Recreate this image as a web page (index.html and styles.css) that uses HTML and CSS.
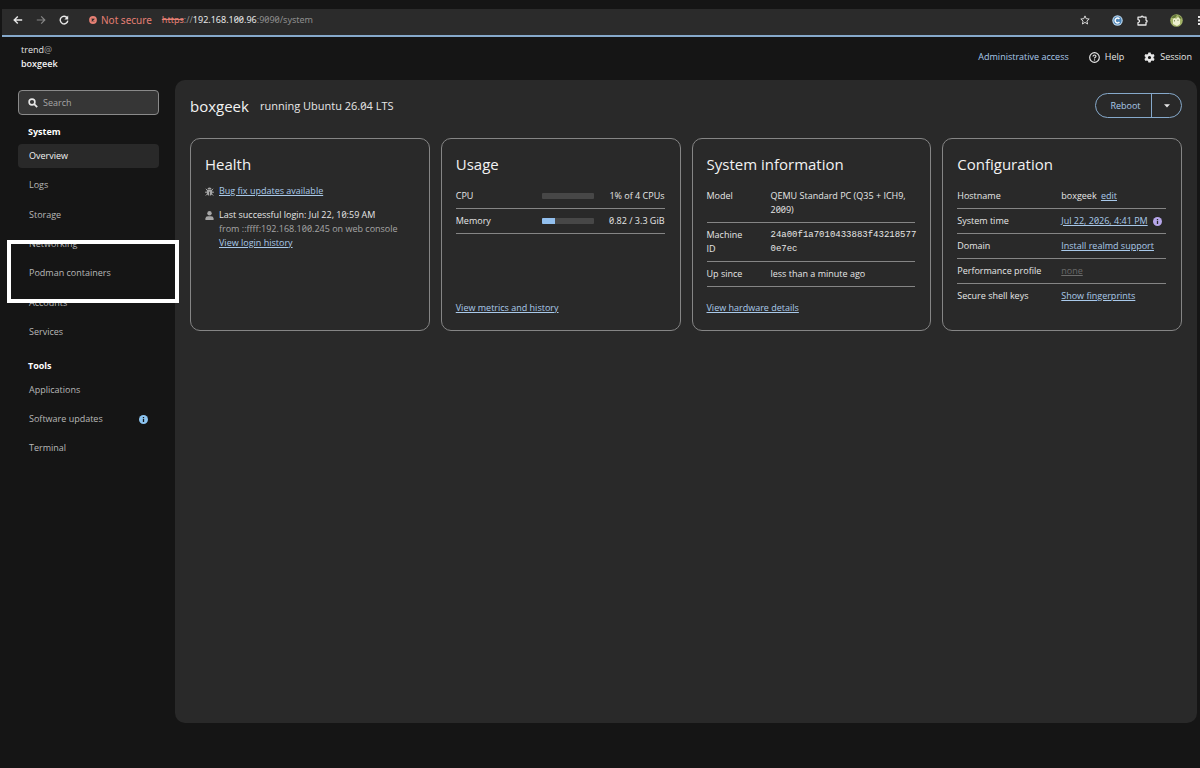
FILE: index.html
```html
<!DOCTYPE html>
<html lang="en">
<head>
<meta charset="utf-8">
<meta name="viewport" content="width=device-width, initial-scale=1">
<title>Overview - trend@boxgeek</title>
<link rel="stylesheet" href="styles.css">
</head>
<body>
<div class="toolbar">
  <button class="tool" aria-label="Back"><svg width="10" height="10" viewBox="0 0 10 10"><path d="M9.2 5H1.4M4.8 1.4L1.2 5l3.6 3.6" fill="none" stroke="currentColor" stroke-width="1.4"/></svg></button>
  <button class="tool tool-off" aria-label="Forward"><svg width="10" height="10" viewBox="0 0 10 10"><path d="M.8 5h7.8M5.2 1.4L8.8 5 5.2 8.6" fill="none" stroke="currentColor" stroke-width="1.2"/></svg></button>
  <button class="tool" aria-label="Reload"><svg width="10" height="10" viewBox="0 0 10 10"><path d="M8.2 3A3.8 3.8 0 1 0 8.8 5.6" fill="none" stroke="currentColor" stroke-width="1.4"/><path d="M9.2.6v3.8H5.4z" fill="currentColor"/></svg></button>
  <div class="address">
    <span class="insecure"><svg width="8" height="8" viewBox="0 0 8 8"><circle cx="4" cy="4" r="3.9" fill="#e57f73"/><path d="M2.7 2.7l2.6 2.6M5.3 2.7L2.7 5.3" stroke="#2b2b2b" stroke-width="1.1"/></svg>Not secure</span>
    <span class="url"><s>https</s>://<b>192.168.100.96</b>:9090/system</span>
  </div>
  <div class="toolbar-right">
    <button class="tool" aria-label="Bookmark"><svg width="10" height="10" viewBox="0 0 10 10"><path d="M5 .9l1.2 2.8 3 .3-2.3 2 .7 3L5 7.4 2.400 9l.7-3L.8 4l3-.3z" fill="none" stroke="currentColor" stroke-width=".9"/></svg></button>
    <button class="tool tool-extension" aria-label="Extension"><svg width="11" height="11" viewBox="0 0 11 11"><circle cx="5.500" cy="5.500" r="5.200" fill="#b7d4ec"/><circle cx="5.500" cy="5.500" r="4" fill="#4c84b6"/><path d="M7.400 4A2.400 2.400 0 1 0 7.400 7" fill="none" stroke="#fff" stroke-width="1.500"/></svg></button>
    <button class="tool" aria-label="Extensions"><svg width="11" height="11" viewBox="0 0 11 11"><path d="M1 2.200h3a1.100 1.100 0 0 1 2.200 0H9v3a1.100 1.100 0 0 1 0 2.200V10H1V7.600a1.500 1.500 0 0 0 0-3z" fill="none" stroke="currentColor" stroke-width="1.300" stroke-linejoin="round"/></svg></button>
    <button class="tool tool-profile" aria-label="Profile"><svg width="13" height="13" viewBox="0 0 13 13"><circle cx="6.500" cy="6.500" r="6.300" fill="#a3b368"/><path d="M1 4Q4 0 7 1L5 4zM8 1l4 3-2 1z" fill="#66793b"/><path d="M3 5l2-1 1 1 2-2 2 2v5l-3 2-4-2z" fill="#edf0cf"/><path d="M4.500 6v1.500M8 5.500V7" stroke="#6f7d4c" stroke-width=".8"/></svg></button>
    <button class="tool" aria-label="Menu"><svg width="3" height="10" viewBox="0 0 3 10"><path d="M1 1h2v2H1zM1 4.500h2v2H1zM1 8h2v2H1z" fill="currentColor"/></svg></button>
  </div>
</div>

<div class="shell">
  <header class="masthead">
    <div class="host"><span>trend<i>@</i></span><strong>boxgeek</strong></div>
    <div class="masthead-actions">
      <button class="plain access">Administrative access</button>
      <button class="plain"><svg width="11" height="11" viewBox="0 0 11 11"><circle cx="5.500" cy="5.500" r="4.800" fill="none" stroke="currentColor" stroke-width="1.200"/><path d="M4 4.400Q4 3 5.500 3T7 4.300C7 5.300 5.500 5.200 5.500 6.400" fill="none" stroke="currentColor" stroke-width="1.100"/><circle cx="5.500" cy="7.900" r=".7" fill="currentColor"/></svg>Help</button>
      <button class="plain"><svg width="11" height="11" viewBox="0 0 11 11"><path fill="currentColor" fill-rule="evenodd" d="M4.400.4h2.200l.4 1.500 1 .6 1.500-.5 1.100 1.900-1.100 1.100v1l1.100 1.100L9.500 9 8 8.500l-1 .6-.4 1.500H4.400L4 9.100l-1-.6L1.500 9 .4 7.100 1.500 6V5L.4 3.900 1.500 2l1.500.5 1-.6zM5.500 3.900a1.600 1.600 0 1 0 0 3.200 1.600 1.600 0 0 0 0-3.200z"/></svg>Session</button>
    </div>
  </header>

  <nav class="sidebar" aria-label="System navigation">
    <label class="search"><svg width="10" height="10" viewBox="0 0 10 10"><circle cx="4" cy="4" r="2.900" fill="none" stroke="currentColor" stroke-width="1.600"/><path d="M6.200 6.200L9.200 9.200" stroke="currentColor" stroke-width="1.800"/></svg><input type="search" placeholder="Search" aria-label="Search"></label>
    <h2 class="nav-title">System</h2>
    <ul class="nav-list nav-list-system">
      <li><a class="nav-link current" href="#overview" aria-current="page">Overview</a></li>
      <li><a class="nav-link" href="#logs">Logs</a></li>
      <li><a class="nav-link" href="#storage">Storage</a></li>
      <li><a class="nav-link" href="#networking">Networking</a></li>
      <li class="marked"><a class="nav-link" href="#podman">Podman containers</a></li>
      <li><a class="nav-link" href="#accounts">Accounts</a></li>
      <li><a class="nav-link" href="#services">Services</a></li>
    </ul>
    <h2 class="nav-title nav-title-tools">Tools</h2>
    <ul class="nav-list">
      <li><a class="nav-link" href="#applications">Applications</a></li>
      <li><a class="nav-link" href="#updates">Software updates<svg width="9" height="9" viewBox="0 0 9 9"><circle cx="4.500" cy="4.500" r="4.500" fill="#8cc4f0"/><path d="M4.500 2v1.200M4.500 4v3" stroke="#151515" stroke-width="1.300"/></svg></a></li>
      <li><a class="nav-link" href="#terminal">Terminal</a></li>
    </ul>
  </nav>

  <main class="page">
    <div class="page-head">
      <h1 class="page-title">boxgeek</h1>
      <span class="running">running Ubuntu 26.04 LTS</span>
      <div class="split">
        <button class="split-main">Reboot</button>
        <button class="split-toggle" aria-label="More power options"><svg width="6" height="4" viewBox="0 0 6 4"><path d="M0 .2h6L3 3.600z" fill="currentColor"/></svg></button>
      </div>
    </div>

    <div class="cards">
      <section class="card">
        <h2 class="card-title">Health</h2>
        <ul class="health">
          <li><svg width="9" height="9" viewBox="0 0 9 9"><path d="M2.400 2.600a2.100 2.100 0 0 1 4.200 0zM1.800 3h5.400v3.500Q6.800 8.500 4.900 8.800V4.800h-.8v4Q2.200 8.500 1.800 6.500z" fill="currentColor"/><path d="M.8 1.800L2.300 3.300M8.200 1.800L6.700 3.300M0 5.200h2M7 5.200h2M.8 8.500L2.500 6.800M8.200 8.500L6.500 6.800" stroke="currentColor" stroke-width="1"/></svg>
            <div><a href="#fixes">Bug fix updates available</a></div></li>
          <li><svg width="9" height="9" viewBox="0 0 9 9"><circle cx="4.500" cy="2.300" r="2.200" fill="currentColor"/><path d="M.4 9V7.500Q.5 5.200 3 5.200h3Q8.500 5.200 8.600 7.500V9z" fill="currentColor"/></svg>
            <div>Last successful login: Jul 22, 10:59 AM<p class="muted">from ::ffff:192.168.100.245 on web console</p><a href="#logins">View login history</a></div></li>
        </ul>
      </section>

      <section class="card">
        <h2 class="card-title">Usage</h2>
        <table class="facts usage">
          <tr><th scope="row">CPU</th><td class="meter-cell"><div class="meter"><div class="meter-fill" style="width:0%"></div></div></td><td class="amount">1% of 4 CPUs</td></tr>
          <tr><th scope="row">Memory</th><td class="meter-cell"><div class="meter"><div class="meter-fill" style="width:25%"></div></div></td><td class="amount">0.82 / 3.3 GiB</td></tr>
        </table>
        <a class="card-link" href="#metrics">View metrics and history</a>
      </section>

      <section class="card">
        <h2 class="card-title">System information</h2>
        <table class="facts info">
          <tr><th scope="row">Model</th><td>QEMU Standard PC (Q35 + ICH9, 2009)</td></tr>
          <tr><th scope="row">Machine ID</th><td class="mono">24a00f1a7010433883f43218577<wbr>0e7ec</td></tr>
          <tr><th scope="row">Up since</th><td>less than a minute ago</td></tr>
        </table>
        <a class="card-link" href="#hardware">View hardware details</a>
      </section>

      <section class="card">
        <h2 class="card-title">Configuration</h2>
        <table class="facts config">
          <tr><th scope="row">Hostname</th><td>boxgeek <a class="edit" href="#hostname">edit</a></td></tr>
          <tr><th scope="row">System time</th><td><div class="time"><a href="#time">Jul 22, 2026, 4:41 PM</a><svg width="9" height="9" viewBox="0 0 9 9"><circle cx="4.500" cy="4.500" r="4.500" fill="#b6a6e9"/><path d="M4.500 2v1.200M4.500 4v3" stroke="#292929" stroke-width="1.300"/></svg></div></td></tr>
          <tr><th scope="row">Domain</th><td><a href="#domain">Install realmd support</a></td></tr>
          <tr><th scope="row">Performance profile</th><td><a class="disabled" href="#profile">none</a></td></tr>
          <tr><th scope="row">Secure shell keys</th><td><a href="#keys">Show fingerprints</a></td></tr>
        </table>
      </section>
    </div>
  </main>
</div>
</body>
</html>
```

FILE: styles.css
```css
* { box-sizing: border-box; }

body {
  margin: 0;
  min-height: 100vh;
  padding: 9px 0 45px 2px;
  display: flex;
  flex-direction: column;
  background: #151515;
  color: #e6e6e6;
  font: 9px/14px "Open Sans", sans-serif;
  font-feature-settings: "zero";
}

h1, h2, p, ul { margin: 0; padding: 0; }
ul { list-style: none; }
svg { display: block; flex: none; }
a { color: #a9c9ea; text-underline-offset: 1px; }
button { font: inherit; color: inherit; background: none; border: 0; padding: 0; cursor: pointer; }

/* Browser toolbar */
.toolbar {
  display: flex;
  align-items: center;
  height: 28px;
  padding: 0 0 4px 11px;
  gap: 13px;
  background: #2b2b2b;
  border-bottom: 2px solid #86a9cb;
  font-family: "Noto Sans", sans-serif;
}
.tool { color: #e8e8e8; }
.tool-off { color: #858585; }
.address { display: flex; align-items: center; gap: 10px; margin-left: 7px; }
.insecure { display: flex; align-items: center; gap: 4px; color: #e57f73; font-size: 10px; }
.url { color: #8d8d8d; }
.url s { color: #e57f73; }
.url b { color: #e8e8e8; font-weight: 400; }
.toolbar-right { display: flex; align-items: center; gap: 14px; margin-left: auto; }
.tool-extension { margin-left: 8px; }
.tool-profile { margin-left: 8px; }

/* Shell */
.shell {
  flex: 1;
  display: grid;
  grid-template: 43px 1fr / 173px 1fr;
}
.masthead {
  grid-column: 1 / -1;
  display: flex;
  justify-content: space-between;
  align-items: flex-start;
  padding: 6px 8px 0 19px;
}
.host { display: flex; flex-direction: column; }
.host i { font-style: normal; color: #9a9a9a; }
.host strong { color: #f2f2f2; font-weight: 600; }
.masthead-actions { display: flex; gap: 20px; padding-top: 7px; }
.plain { display: flex; align-items: center; gap: 5px; }
.access { color: #a9c9ea; }

/* Sidebar */
.sidebar { padding: 10px 16px 0; }
.search {
  display: flex;
  align-items: center;
  gap: 5px;
  height: 25px;
  padding: 0 9px;
  background: #363636;
  border: 1px solid #8a8a8a;
  border-radius: 4px;
}
.search input {
  flex: 1;
  min-width: 0;
  padding: 0;
  border: 0;
  outline: 0;
  background: none;
  color: #e6e6e6;
  font: inherit;
}
.search input::placeholder { color: #a6a6a6; opacity: 1; }
.nav-title { padding: 10px 10px 5px; font-size: 9px; font-weight: 700; color: #fff; }
.nav-title-tools { padding-top: 15px; }
.nav-list { display: grid; gap: 5px; }
.nav-list-system { min-height: 200px; align-content: space-between; }
.nav-link {
  display: flex;
  align-items: center;
  justify-content: space-between;
  height: 24px;
  padding: 0 11px;
  border-radius: 4px;
  color: #b8b8b8;
  text-decoration: none;
}
.current { background: #292929; color: #f2f2f2; }
.marked { position: relative; }
.marked::after {
  content: "";
  position: absolute;
  inset: -21px -20px -18px -11px;
  border: 4px solid #fff;
  pointer-events: none;
}

/* Page */
.page { margin-right: 3px; padding: 13px 15px; background: #292929; border-radius: 10px; }
.page-head { display: flex; align-items: center; gap: 11px; margin-bottom: 20px; }
.page-title { font-size: 15px; line-height: 20px; font-weight: 400; color: #f2f2f2; }
.running { font-size: 11px; }
.split {
  display: flex;
  height: 25px;
  margin-left: auto;
  border: 1px solid #86a9cb;
  border-radius: 13px;
  color: #a9c9ea;
}
.split-main { width: 56px; padding-left: 4px; border-right: 1px solid #86a9cb; }
.split-toggle { display: grid; place-items: center; width: 29px; color: #e6e6e6; }

.cards { display: grid; grid-template-columns: repeat(4, 1fr); gap: 11px; }
.card {
  display: flex;
  flex-direction: column;
  min-height: 193px;
  padding: 14px 15px 15px 14px;
  border: 1px solid #858585;
  border-radius: 10px;
}
.card-title { margin-bottom: 9px; font-size: 15px; line-height: 22px; font-weight: 400; color: #f2f2f2; }
.card-link { align-self: flex-start; margin-top: auto; }

.health { display: grid; gap: 10px; }
.health li { display: flex; gap: 5px; color: #e6e6e6; }
.health svg { margin-top: 3px; color: #a6a6a6; }
.muted { color: #a6a6a6; }

.facts { width: 100%; border-collapse: collapse; table-layout: fixed; }
.facts th, .facts td { padding: 5px 0; text-align: left; vertical-align: top; font-weight: 400; }
.facts tr { border-bottom: 1px solid #858585; }
.config tr:last-child { border-bottom: 0; }
.usage th { width: 86px; }
.usage .meter-cell { width: 52px; vertical-align: middle; }
.usage .amount { text-align: right; }
.info th { width: 64px; padding-right: 20px; }
.config th { width: 104px; }
.mono { font-family: "Liberation Mono", monospace; }
.meter { height: 6px; background: #474747; border-radius: 1px; overflow: hidden; }
.meter-fill { height: 100%; background: #92bfee; }
.time { display: flex; align-items: center; gap: 5px; white-space: nowrap; }
.edit { margin-left: 2px; }
.disabled { color: #6b6b6b; }
```
